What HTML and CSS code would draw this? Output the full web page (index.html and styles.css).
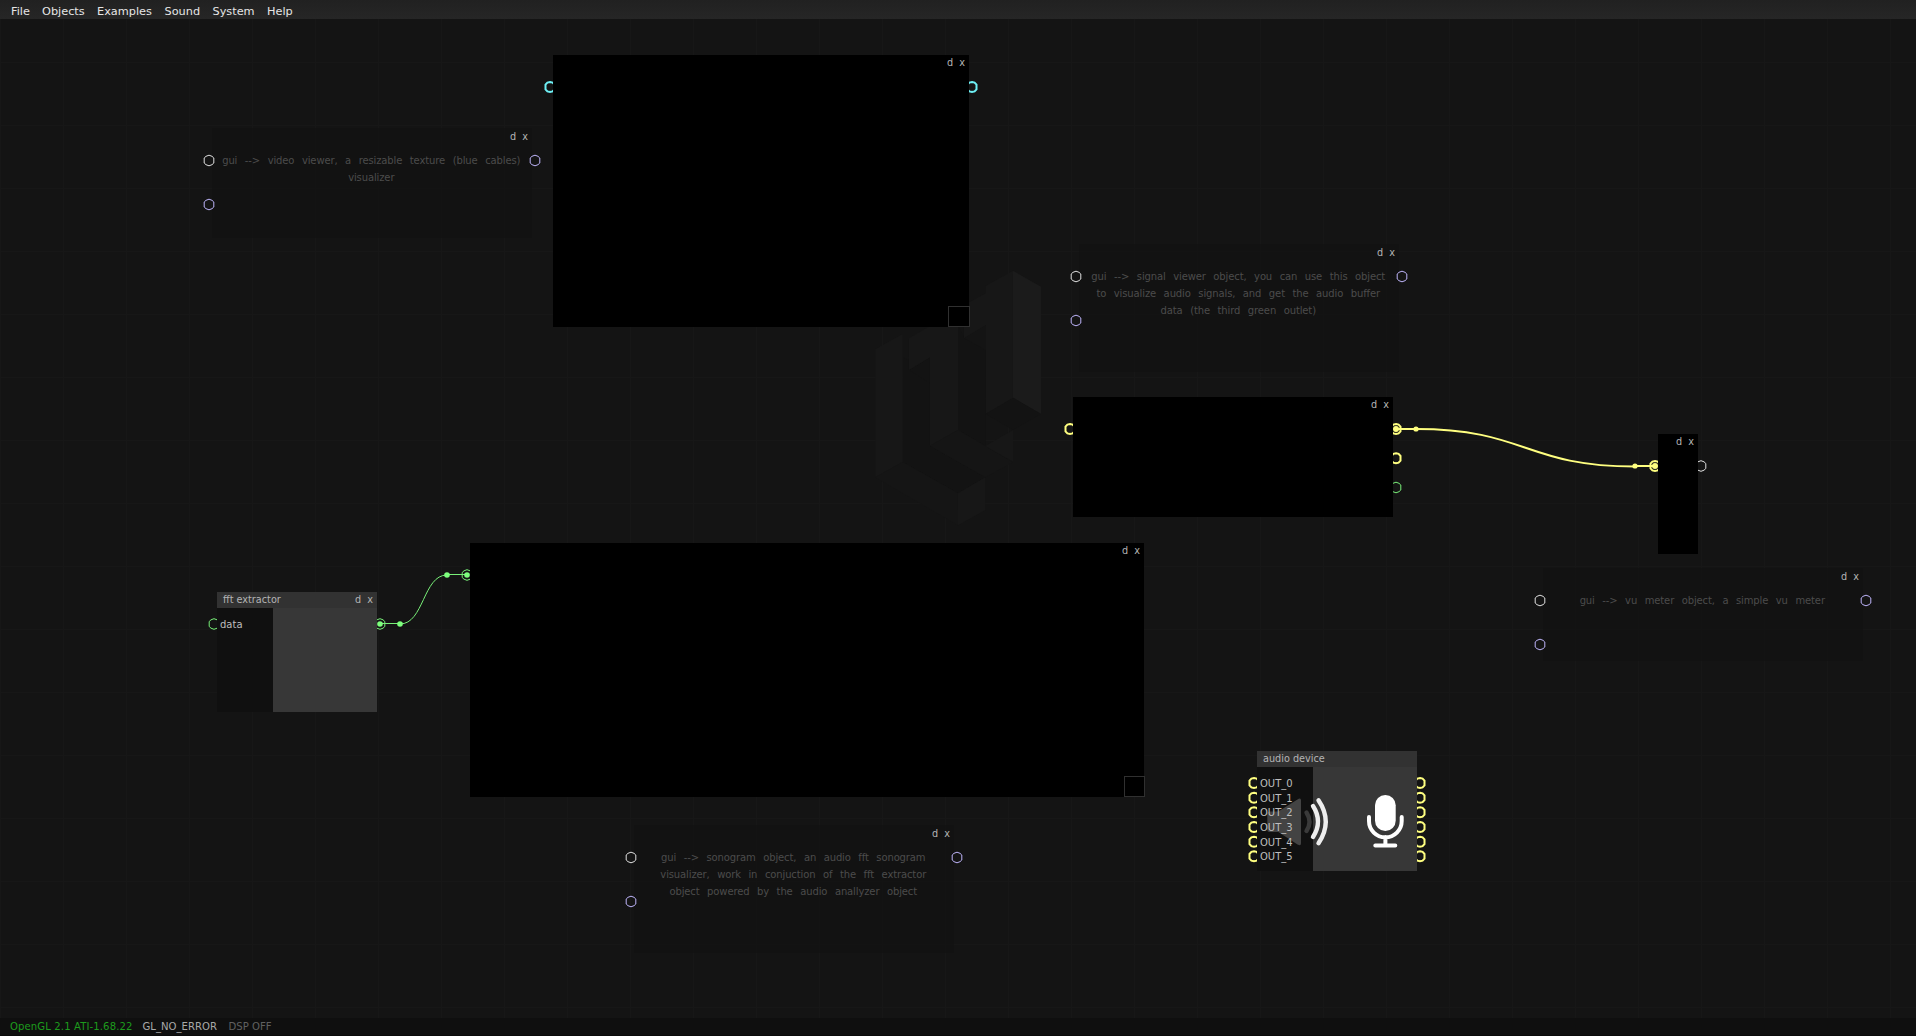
FILE: index.html
```html
<!DOCTYPE html>
<html lang="en">
<head>
<meta charset="utf-8">
<title>Patch editor</title>
<link rel="stylesheet" href="styles.css">
</head>
<body>
<nav class="menubar">
  <span class="m-file">File</span><span class="m-objects">Objects</span><span class="m-examples">Examples</span><span class="m-sound">Sound</span><span class="m-system">System</span><span>Help</span>
</nav>

<main class="patch">
  <section class="node comment c-video">
    <header><b>d</b><b>x</b></header>
    <p>gui --&gt; video viewer, a resizable texture (blue cables)</p><p>visualizer</p>
  </section>
  <section class="node comment c-signal">
    <header><b>d</b><b>x</b></header>
    <p>gui --&gt; signal viewer object, you can use this object</p><p>to visualize audio signals, and get the audio buffer</p><p>data (the third green outlet)</p>
  </section>
  <section class="node comment c-vu">
    <header><b>d</b><b>x</b></header>
    <p>gui --&gt; vu meter object, a simple vu meter</p>
  </section>
  <section class="node comment c-sonogram">
    <header><b>d</b><b>x</b></header>
    <p>gui --&gt; sonogram object, an audio fft sonogram</p><p>visualizer, work in conjuction of the fft extractor</p><p>object powered by the audio anallyzer object</p>
  </section>

  <svg class="wires" width="1916" height="1036" viewBox="0 0 1916 1036">
    <defs>
      <polygon id="port" points="0,-5.300 3,-4.200 4.800,-2.500 4.800,2.500 3,4.200 0,5.300 -3,4.200 -4.800,2.500 -4.800,-2.500 -3,-4.200"/>
      <polygon id="ring" points="0,-5 2.600,-4.400 4.500,-2.300 4.500,2.300 2.600,4.400 0,5 -2.600,4.400 -4.500,2.300 -4.500,-2.300 -2.600,-4.400"/>
    </defs>

    <!-- logo watermark -->
    <g transform="translate(850 250) scale(.33333)">
      <polygon fill="#131313" points="158,320 240,368 240,587 406,682 324,730 158,636"/>
      <polygon fill="#131313" points="324,225 342,264 407,300 407,588 324,540"/>
      <polygon fill="#131313" points="177,360 240,322 240,400"/>
      <polygon fill="#171717" points="76,298 158,252 158,636 76,682"/>
      <polygon fill="#171717" points="177,265 240,228 324,180 324,540 240,587 240,322 177,360"/>
      <polygon fill="#171717" points="342,166 407,130 407,108 489,62 489,445 407,492 407,225 342,264"/>
      <polygon fill="#1b1b1b" points="489,62 573,110 573,492 489,443"/>
      <polygon fill="#131313" points="489,443 573,492 489,540 407,492"/>
      <polygon fill="#151515" points="158,636 324,730 324,826 76,682"/>
      <polygon fill="#151515" points="324,540 489,637 406,682 240,587"/>
      <polygon fill="#171717" points="324,730 406,682 406,780 324,826"/>
      <polygon fill="#171717" points="406,588 489,540 489,635"/>
    </g>

    <!-- cables -->
    <g class="green">
      <path class="wire" d="M380 623.500H400M400 624C424 624 423 575 447 575M447 574.500H467"/>
      <circle class="dot" cx="380" cy="624" r="2.800"/><circle class="dot" cx="400" cy="624" r="2.800"/>
      <circle class="dot" cx="447" cy="575" r="2.800"/><circle class="dot" cx="467" cy="575" r="2.800"/>
      <use href="#port" x="214" y="624"/><use href="#port" x="380" y="624"/><use href="#port" x="467" y="575"/>
      <use href="#port" x="1396" y="487.500"/>
    </g>
    <g class="yellow">
      <path class="wire" d="M1396 429H1416C1526 429 1525 466.500 1635 466.500M1635 466H1655"/>
      <circle class="dot" cx="1396" cy="429" r="3"/><circle class="dot" cx="1416" cy="429" r="2.600"/>
      <circle class="dot" cx="1635" cy="466" r="2.600"/><circle class="dot" cx="1655" cy="466" r="3"/>
      <use href="#ring" x="1070" y="429"/><use href="#ring" x="1396" y="429"/><use href="#ring" x="1396" y="458.300"/><use href="#ring" x="1655" y="466"/>
      <use href="#ring" x="1254" y="783"/><use href="#ring" x="1254" y="797.700"/><use href="#ring" x="1254" y="812.300"/><use href="#ring" x="1254" y="827"/><use href="#ring" x="1254" y="841.700"/><use href="#ring" x="1254" y="856.300"/>
      <use href="#ring" x="1420" y="783"/><use href="#ring" x="1420" y="797.700"/><use href="#ring" x="1420" y="812.300"/><use href="#ring" x="1420" y="827"/><use href="#ring" x="1420" y="841.700"/><use href="#ring" x="1420" y="856.300"/>
    </g>
    <g class="cyan"><use href="#ring" x="550" y="87"/><use href="#ring" x="972" y="87"/></g>
    <g class="white">
      <use href="#port" x="209" y="160.500"/><use href="#port" x="1076" y="276.500"/><use href="#port" x="1540" y="600.500"/><use href="#port" x="631" y="857.500"/><use href="#port" x="1701" y="466"/>
    </g>
    <g class="violet">
      <use href="#port" x="209" y="204.500"/><use href="#port" x="535" y="160.500"/>
      <use href="#port" x="1076" y="320.500"/><use href="#port" x="1402" y="276.500"/>
      <use href="#port" x="1540" y="644.500"/><use href="#port" x="1866" y="600.500"/>
      <use href="#port" x="631" y="901.500"/><use href="#port" x="957" y="857.500"/>
    </g>
  </svg>

  <section class="node screen video"><header><b>d</b><b>x</b></header><i class="grip"></i></section>
  <section class="node screen signal"><header><b>d</b><b>x</b></header></section>
  <section class="node screen vu"><header><b>d</b><b>x</b></header></section>
  <section class="node screen sonogram"><header><b>d</b><b>x</b></header><i class="grip"></i></section>

  <section class="node box fft">
    <header><span class="title">fft extractor</span><b>d</b><b>x</b></header>
    <div class="body"><ul><li>data</li></ul></div>
  </section>
  <section class="node box audio">
    <header><span class="title">audio device</span></header>
    <div class="body">
      <svg class="device" width="160" height="104" viewBox="0 0 160 104">
        <path fill="#434343" d="M10.300 46.500q0-2 2-2h9L40.500 32.500q3.500-2.500 3.500 1v43q0 3-3.500 1L21.300 65h-9q-2 0-2-2z"/>
        <g fill="none" stroke-linecap="round" stroke-width="4.400">
          <path stroke="#3a3a3a" d="M49.500 45.500q6 9.300 0 18.500"/>
          <path stroke="#eee" d="M56 39q10 15.500 0 31"/>
          <path stroke="#eee" d="M61.500 33.300q14.500 21.500 0 43"/>
        </g>
        <rect x="118" y="28" width="20.700" height="36" rx="10.300" fill="#fff"/>
        <g fill="none" stroke="#fff" stroke-width="4" stroke-linecap="round">
          <path d="M112 50v4a16.300 16.300 0 0 0 32.700 0v-4M118.300 78.500h20M128.400 70v8"/>
        </g>
      </svg>
      <ul><li>OUT_0</li><li>OUT_1</li><li>OUT_2</li><li>OUT_3</li><li>OUT_4</li><li>OUT_5</li></ul>
    </div>
  </section>
</main>

<footer class="status"><span class="gl">OpenGL 2.1 ATI-1.68.22</span><span class="err">GL_NO_ERROR</span><span class="dsp">DSP OFF</span></footer>
</body>
</html>
```

FILE: styles.css
```css
* { box-sizing: border-box; }
body {
  margin: 0;
  height: 1036px;
  overflow: hidden;
  position: relative;
  display: flex;
  flex-direction: column;
  font-family: "DejaVu Sans", Verdana, sans-serif;
  background-color: #141414;
  background-image:
    linear-gradient(90deg, #171717 1px, transparent 1px),
    linear-gradient(#171717 1px, transparent 1px);
  background-size: 63px 63px;
  background-position: 0 0, 0 -1px;
}
p, ul { margin: 0; padding: 0; list-style: none; }

.menubar {
  height: 19px;
  flex: none;
  display: flex;
  padding-left: 11px;
  font-size: 11.300px;
  line-height: 24px;
  color: #e6e6e6;
  background: linear-gradient(#212121, #262626);
}
.m-file { width: 31px; }
.m-objects { width: 55px; }
.m-examples { width: 67.500px; }
.m-sound { width: 48px; }
.m-system { width: 54.500px; }

.patch { flex: 1; }

.status {
  height: 18px;
  flex: none;
  display: flex;
  padding-left: 10px;
  font-size: 10.100px;
  line-height: 17px;
  background: #0f0f0f;
  border-bottom: 1px solid #0a0a0a;
}
.gl { width: 132.500px; color: #1d9b1d; letter-spacing: .1px; }
.err { width: 86px; color: #a8a8a8; }
.dsp { color: #606060; }

/* cables and ports lie below the opaque objects */
.wires { position: absolute; left: 0; top: 0; fill: none; }
.wires .green { stroke: #78f078; }
.wires .green .dot { fill: #7dff7d; stroke: none; }
.wires .yellow { stroke: #ffff80; stroke-width: 2; }
.wires .yellow .dot { fill: #ffff80; stroke: none; }
.wires .cyan { stroke: #6ef0f5; stroke-width: 2; }
.wires .white { stroke: #e0e0e0; }
.wires .violet { stroke: #beb4fa; }

.node { position: absolute; }
.node header {
  height: 16px;
  display: flex;
  justify-content: flex-end;
  padding: 0 4px 0 6px;
  gap: 6px;
  font-size: 9.700px;
  line-height: 16px;
  color: #b4b4b4;
}
.node header b { font-weight: 400; }
.title { margin-right: auto; }

.comment { width: 320px; background: rgba(15, 15, 15, .5); }
.comment p {
  height: 17px;
  padding-right: 1.500px;
  line-height: 17px;
  font-size: 10px;
  letter-spacing: -.120px;
  word-spacing: 4.500px;
  text-align: center;
  white-space: nowrap;
  color: #4c4c4c;
}
.comment header { margin-bottom: 8px; line-height: 18px; }
.c-video { left: 212px; top: 128px; height: 110px; }
.c-signal { left: 1079px; top: 244px; height: 128px; }
.c-vu { left: 1543px; top: 568px; height: 93px; }
.c-sonogram { left: 634px; top: 825px; height: 128px; }

.screen { background: #000; }
.video { left: 553px; top: 55px; width: 416px; height: 272px; }
.signal { left: 1073px; top: 397px; width: 320px; height: 120px; }
.vu { left: 1658px; top: 434px; width: 40px; height: 120px; }
.sonogram { left: 470px; top: 543px; width: 674px; height: 254px; }
.grip {
  position: absolute;
  right: -1px;
  bottom: 0;
  width: 22px;
  height: 21px;
  border: 1px solid #303030;
}
.sonogram .grip { width: 21px; }

.box { width: 160px; height: 120px; display: flex; flex-direction: column; }
.box header { background: #323232; }
.body {
  flex: 1;
  position: relative;
  background: linear-gradient(90deg, #101010 56px, #373737 56px);
}
.body ul { position: relative; padding: 9px 0 0 3px; }
.body li { height: 14.670px; line-height: 15.500px; font-size: 10px; color: #bebebe; }
.fft { left: 217px; top: 592px; }
.audio { left: 1257px; top: 751px; }
.device { position: absolute; left: 0; top: 0; }
```
